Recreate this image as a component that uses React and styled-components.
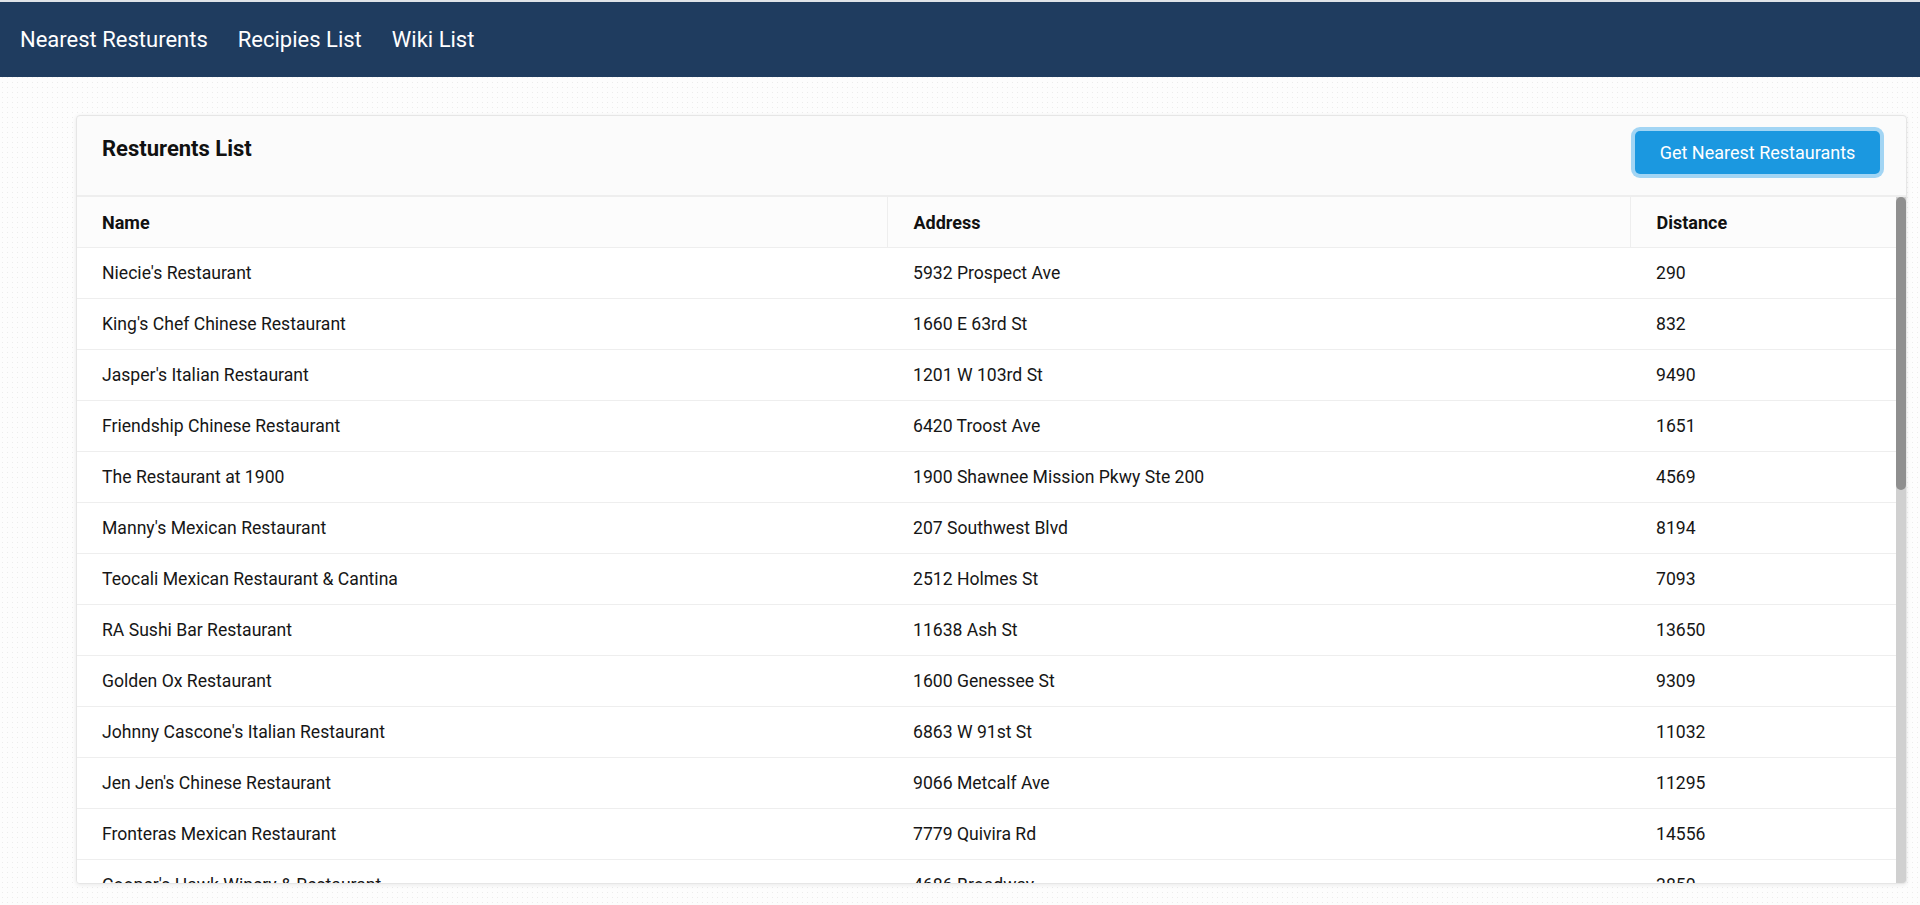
import React from "react";
import styled, { createGlobalStyle } from "styled-components";

const GlobalStyle = createGlobalStyle`
  html, body { margin: 0; padding: 0; }
  body {
    font-family: Roboto, "Liberation Sans", sans-serif;
    background-color: #fdfdfd;
    background-image: radial-gradient(#ececec 0.6px, transparent 0.9px);
    background-size: 5px 5px;
    color: #161616;
    overflow: hidden;
  }
`;

const Page = styled.div`
  display: flex;
  flex-direction: column;
  height: 905px;
`;

const NavBar = styled.nav`
  height: 75px;
  border-top: 2px solid #dfe3e8;
  background: #1f3c5f;
  display: flex;
  align-items: center;
  padding-left: 20px;
  gap: 30px;
`;

const NavLink = styled.a`
  color: #ffffff;
  font-family: Roboto, "Liberation Sans", sans-serif;
  font-size: 22px;
  text-decoration: none;
  cursor: pointer;
`;

const Main = styled.main`
  padding: 38px 13px 0 76px;
`;

const Card = styled.section`
  height: 767px;
  display: flex;
  flex-direction: column;
  background: #fbfbfb;
  border: 1px solid #e6e6e6;
  border-radius: 4px;
  box-shadow: 0 1px 4px rgba(0, 0, 0, 0.08);
  overflow: hidden;
`;

const CardHeader = styled.div`
  height: 79px;
  flex: none;
  display: flex;
  justify-content: space-between;
  align-items: flex-start;
  padding: 0 26px 0 25px;
  border-bottom: 2px solid #eeeeee;
`;

const Title = styled.h2`
  margin: 20px 0 0;
  font-family: Roboto, "Liberation Sans", sans-serif;
  font-size: 22px;
  font-weight: 700;
  color: #111;
`;

const PrimaryButton = styled.button`
  margin-top: 15px;
  width: 245px;
  height: 43px;
  border: none;
  border-radius: 5px;
  background: #1b98e0;
  color: #ffffff;
  font-family: Roboto, "Liberation Sans", sans-serif;
  font-size: 18px;
  box-shadow: 0 0 0 4px #a2d5f4;
  cursor: pointer;
`;

const TableFrame = styled.div`
  position: relative;
  flex: 1;
  min-height: 0;
  background: #ffffff;
`;

const ScrollArea = styled.div`
  height: 100%;
  overflow-y: auto;
  padding-right: 10px;
  box-sizing: border-box;
`;

const ScrollTrack = styled.div`
  position: absolute;
  top: 0;
  right: 0;
  bottom: 0;
  width: 10px;
  background: #d0d0d0;
`;

const ScrollThumb = styled.div`
  height: 293px;
  border-radius: 5px;
  background: #8f8f8f;
`;

const Table = styled.table`
  width: 100%;
  border-collapse: collapse;
  table-layout: fixed;
  font-family: Roboto, "Liberation Sans", sans-serif;
`;

const HeadCell = styled.th`
  height: 50px;
  padding: 0 25px;
  text-align: left;
  font-size: 18px;
  font-weight: 700;
  color: #111;
  background: #fcfcfc;
  border-bottom: 1px solid #eeeeee;
  & + & { border-left: 1px solid #eeeeee; padding-left: 26px; }
`;

const Cell = styled.td`
  height: 50px;
  padding: 0 25px;
  font-size: 17.6px;
  color: #161616;
  border-bottom: 1px solid #eeeeee;
  white-space: nowrap;
  & + & { padding-left: 26px; }
`;

const rows = [
  ["Niecie's Restaurant", "5932 Prospect Ave", 290],
  ["King's Chef Chinese Restaurant", "1660 E 63rd St", 832],
  ["Jasper's Italian Restaurant", "1201 W 103rd St", 9490],
  ["Friendship Chinese Restaurant", "6420 Troost Ave", 1651],
  ["The Restaurant at 1900", "1900 Shawnee Mission Pkwy Ste 200", 4569],
  ["Manny's Mexican Restaurant", "207 Southwest Blvd", 8194],
  ["Teocali Mexican Restaurant & Cantina", "2512 Holmes St", 7093],
  ["RA Sushi Bar Restaurant", "11638 Ash St", 13650],
  ["Golden Ox Restaurant", "1600 Genessee St", 9309],
  ["Johnny Cascone's Italian Restaurant", "6863 W 91st St", 11032],
  ["Jen Jen's Chinese Restaurant", "9066 Metcalf Ave", 11295],
  ["Fronteras Mexican Restaurant", "7779 Quivira Rd", 14556],
  ["Cooper's Hawk Winery & Restaurant", "4686 Broadway", 3850],
  ["Gates Bar-B-Q Restaurant", "3205 Main St", 4120],
  ["Lulu's Thai Noodle Shop", "2030 Central St", 6712],
  ["Corner Restaurant", "4059 Broadway Blvd", 3988],
  ["Pierpont's at Union Station", "30 W Pershing Rd", 5311],
  ["Jack Stack Barbecue", "101 W 22nd St", 5902],
  ["Waldo Thai Place", "8431 Wornall Rd", 7420],
  ["Tannin Wine Bar & Kitchen", "1526 Walnut St", 6105],
  ["Café Sebastienne", "4420 Warwick Blvd", 3312],
  ["Bristol Seafood Grill", "51 E 14th St", 6240],
  ["Cascone's Italian Restaurant", "3733 N Oak Trafficway", 12980],
  ["Café Trio", "4558 Main St", 3460],
  ["Grand Street Cafe", "4740 Grand Ave", 3725],
  ["Piropos Restaurant", "4141 N Mulberry Dr", 15320],
  ["Fiorella's Jack Stack", "13441 Holmes Rd", 10870],
  ["Lidia's Kansas City", "101 W 22nd St", 5880],
  ["Bluestem Restaurant", "900 Westport Rd", 4890],
];

export default function App() {
  return (
    <>
      <GlobalStyle />
      <Page>
        <NavBar>
          <NavLink>Nearest Resturents</NavLink>
          <NavLink>Recipies List</NavLink>
          <NavLink>Wiki List</NavLink>
        </NavBar>
        <Main>
          <Card>
            <CardHeader>
              <Title>Resturents List</Title>
              <PrimaryButton>Get Nearest Restaurants</PrimaryButton>
            </CardHeader>
            <TableFrame>
              <ScrollArea>
                <Table>
                  <colgroup>
                    <col style={{ width: "810px" }} />
                    <col style={{ width: "743px" }} />
                    <col />
                  </colgroup>
                  <thead>
                    <tr>
                      <HeadCell>Name</HeadCell>
                      <HeadCell>Address</HeadCell>
                      <HeadCell>Distance</HeadCell>
                    </tr>
                  </thead>
                  <tbody>
                    {rows.map(([name, addr, dist]) => (
                      <tr key={name + addr}>
                        <Cell>{name}</Cell>
                        <Cell>{addr}</Cell>
                        <Cell>{dist}</Cell>
                      </tr>
                    ))}
                  </tbody>
                </Table>
              </ScrollArea>
              <ScrollTrack>
                <ScrollThumb />
              </ScrollTrack>
            </TableFrame>
          </Card>
        </Main>
      </Page>
    </>
  );
}
